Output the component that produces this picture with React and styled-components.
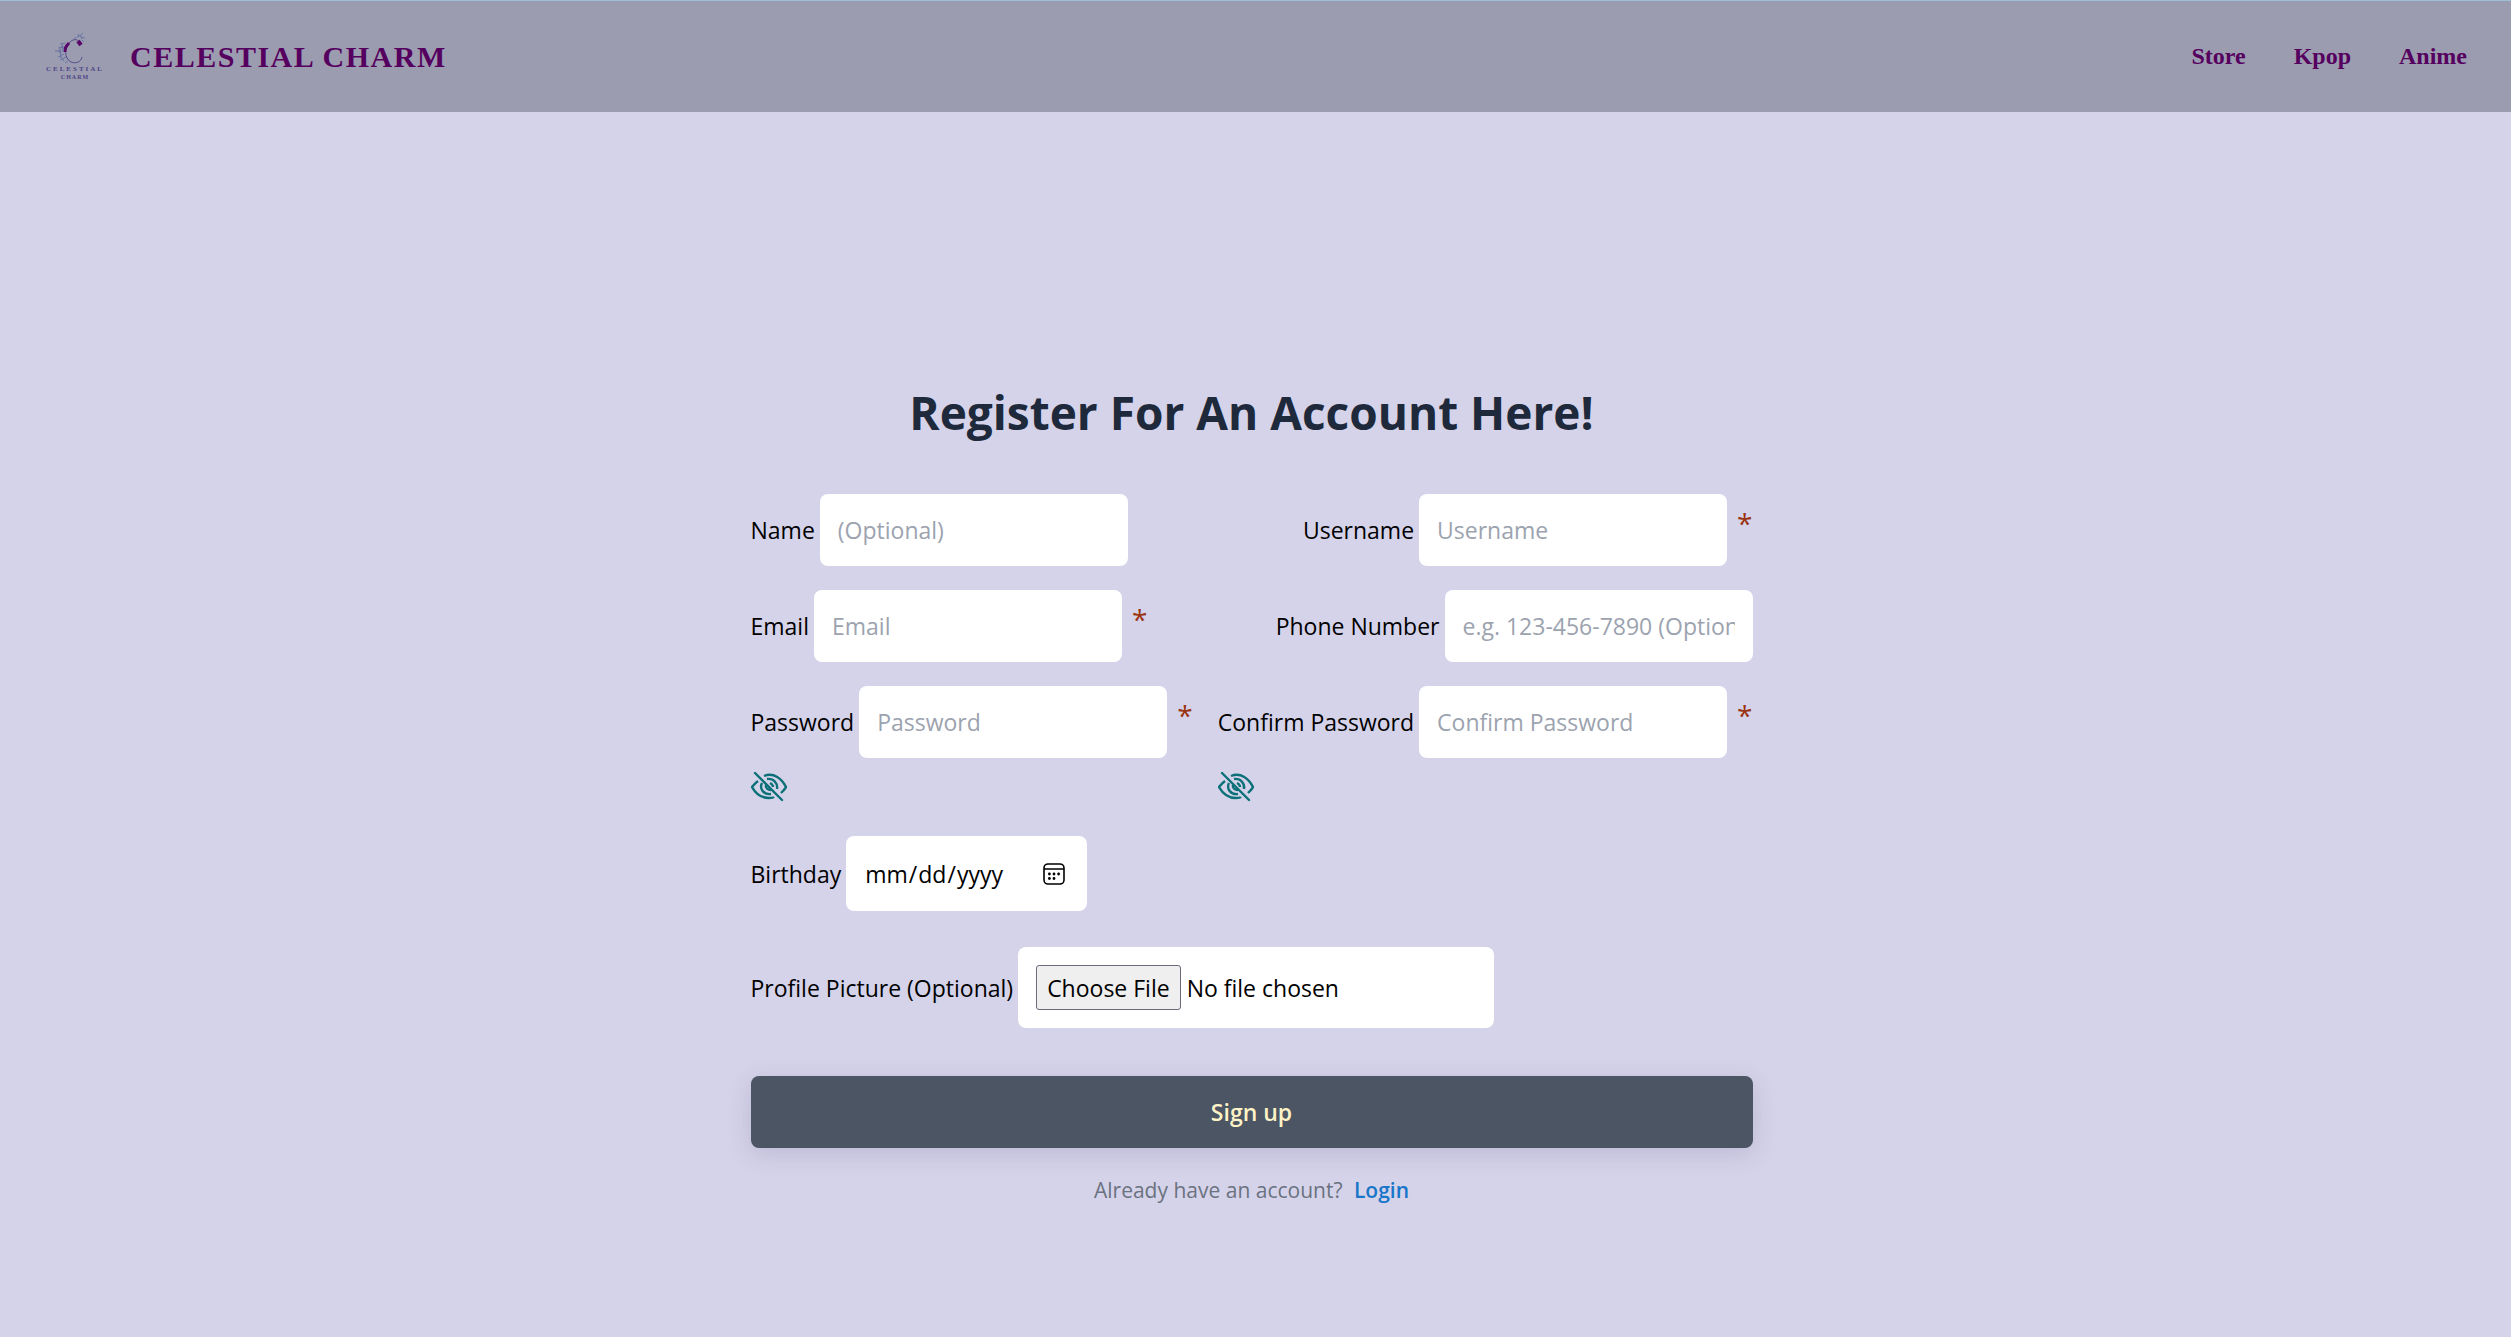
import React, { useState } from 'react';
import styled, { createGlobalStyle } from 'styled-components';

const calendarIcon = `url("data:image/svg+xml,%3Csvg xmlns='http://www.w3.org/2000/svg' viewBox='0 0 22 22' fill='none' stroke='%23000' stroke-width='1.6'%3E%3Crect x='1' y='1' width='20' height='20' rx='4'/%3E%3Cpath d='M1 6h20'/%3E%3Cg fill='%23000' stroke='none'%3E%3Ccircle cx='6.4' cy='11' r='1.4'/%3E%3Ccircle cx='11' cy='11' r='1.4'/%3E%3Ccircle cx='15.6' cy='11' r='1.4'/%3E%3Ccircle cx='6.4' cy='15.5' r='1.4'/%3E%3Ccircle cx='11' cy='15.5' r='1.4'/%3E%3C/g%3E%3C/svg%3E")`;

const Logo = () => (
    <LogoSvg viewBox="0 0 76 60" role="img" aria-label="Celestial Charm logo">
        <g fill="none" stroke="#5a0668">
            <path d="M45 18 C43 12 38 11 34 15 C28 21 28 31 35 35 C40 37 45 35 46 30" strokeWidth="1" stroke="#554a8c" />
            <path d="M33 16 C29 20 29 22 29 25" strokeWidth="3" />
            <path d="M42 14 L45 18" strokeWidth="4" />
        </g>
        <g fill="none" stroke="#6874a4" strokeWidth="1">
            <path d="M38 12 C42 9 43 10 47 6 M43 10 L42 7 M45 10 L49 11 M46 13 L48 15" />
            <path d="M29 16 L24 17 M28 20 L22 21 M28 24 L19 24 M28 27 L22 30 M30 30 L24 33 M32 34 L29 36 M26 16 L27 23 M24 21 L25 31" />
            <path d="M25 19 L28 23 M22 23 L25 27 M24 29 L28 34 M44 8 L46 12" />
        </g>
        <LogoText x="39" y="44" textAnchor="middle" fontSize="7" $gap={2}>CELESTIAL</LogoText>
        <LogoText x="39" y="52" textAnchor="middle" fontSize="6" $gap={1}>CHARM</LogoText>
    </LogoSvg>
);

const EyeOff = () => (
    <EyeSvg viewBox="0 0 36 30" aria-hidden="true">
        <path d="M7 9 C3 12 2 14 1 15 C5 22 11 26 18 26 C20 26 22 26 23 25 M13 4 C23 0 31 7 35 15 C34 17 32 19 30 21" />
        <path d="M11 11 C8 17 13 23 20 22 M16 7 C23 6 27 12 26 17" />
        <path d="M15 13 C14 16 17 18 20 18 M19 11 C21 12 22 13 22 15" />
        <path d="M4 1 L31 28" strokeLinecap="round" />
    </EyeSvg>
);

const Field = ({ id, label, type = 'text', placeholder, required }) => (
    <FieldRow>
        <Label htmlFor={id}>{label}</Label>
        <Input id={id} type={type} placeholder={placeholder} />
        {required && <Required>*</Required>}
    </FieldRow>
);

const PasswordField = ({ id, label }) => {
    const [visible, setVisible] = useState(false);

    return (
        <PasswordBox>
            <Field id={id} label={label} type={visible ? 'text' : 'password'} placeholder={label} required />
            <EyeButton type="button" aria-label={`Toggle ${label}`} onClick={() => setVisible(!visible)}>
                <EyeOff />
            </EyeButton>
        </PasswordBox>
    );
};

const App = () => {
    const handleSubmit = (event) => {
        event.preventDefault();
    };

    return (
        <>
            <GlobalStyle />
            <Header>
                <Brand href="#">
                    <Logo />
                    <BrandName>CELESTIAL CHARM</BrandName>
                </Brand>
                <Nav>
                    <NavLink href="#store">Store</NavLink>
                    <NavLink href="#kpop">Kpop</NavLink>
                    <NavLink href="#anime">Anime</NavLink>
                </Nav>
            </Header>
            <Main>
                <Title>Register For An Account Here!</Title>
                <Form onSubmit={handleSubmit}>
                    <Row>
                        <Field id="name" label="Name" placeholder="(Optional)" />
                        <Field id="username" label="Username" placeholder="Username" required />
                    </Row>
                    <Row>
                        <Field id="email" label="Email" type="email" placeholder="Email" required />
                        <Field id="phone" label="Phone Number" type="tel" placeholder="e.g. 123-456-7890 (Optional)" />
                    </Row>
                    <Row>
                        <PasswordField id="password" label="Password" />
                        <PasswordField id="confirm" label="Confirm Password" />
                    </Row>
                    <FieldRow $spaced>
                        <Label htmlFor="birthday">Birthday</Label>
                        <DateInput id="birthday" type="date" />
                    </FieldRow>
                    <FieldRow>
                        <Label htmlFor="picture">Profile Picture (Optional)</Label>
                        <FileInput id="picture" type="file" />
                    </FieldRow>
                    <SubmitButton type="submit">Sign up</SubmitButton>
                </Form>
                <Footer>
                    Already have an account? <LoginLink href="#login">Login</LoginLink>
                </Footer>
            </Main>
        </>
    );
};

// Styles
const GlobalStyle = createGlobalStyle`
    * {
        box-sizing: border-box;
    }

    body {
        margin: 0;
        background-color: #d5d3e9;
        color: #000;
        font-family: 'Open Sans', 'Noto Sans', sans-serif;
        font-size: 23px;
    }

    input, button {
        font: inherit;
    }
`;

const Header = styled.header`
    display: flex;
    justify-content: space-between;
    align-items: center;
    height: 112px;
    padding: 0 44px 0 36px;
    background-color: #9c9cb0;
    border-top: 1px solid #9dbfd8;
    font-family: 'Liberation Serif', serif;
    font-weight: 700;
`;

const Brand = styled.a`
    display: flex;
    align-items: center;
    gap: 18px;
    color: #55005f;
    text-decoration: none;
`;

const LogoSvg = styled.svg`
    width: 76px;
    height: 60px;
`;

const LogoText = styled.text`
    fill: #4d4585;
    letter-spacing: ${({ $gap }) => $gap}px;
`;

const BrandName = styled.span`
    font-size: 30px;
    letter-spacing: 0.05em;
`;

const Nav = styled.nav`
    display: flex;
    gap: 48px;
`;

const NavLink = styled.a`
    color: #55005f;
    font-size: 24px;
    text-decoration: none;
`;

const Main = styled.main`
    display: flex;
    flex-direction: column;
    align-items: center;
    padding: 264px 32px 48px 24px;
`;

const Title = styled.h1`
    margin: 0 0 46px;
    color: #1e293b;
    font-size: 46px;
    font-weight: 700;
    line-height: 72px;
`;

const Form = styled.form`
    display: flex;
    flex-direction: column;
    gap: 24px;
    width: 100%;
    max-width: 1002px;
`;

const Row = styled.div`
    display: flex;
    justify-content: space-between;
    align-items: flex-start;
`;

const FieldRow = styled.div`
    display: flex;
    align-items: center;
    margin-bottom: ${({ $spaced }) => ($spaced ? '12px' : '0')};
`;

const PasswordBox = styled.div`
    margin-bottom: 10px;
`;

const Label = styled.label`
    margin-right: 5px;
`;

const Input = styled.input`
    width: 308px;
    height: 72px;
    padding: 0 18px;
    background-color: #fff;
    border: none;
    border-radius: 8px;
    outline: none;

    &::placeholder {
        color: #9ca3af;
        opacity: 1;
    }
`;

const DateInput = styled(Input)`
    width: 241px;
    height: 75px;

    &::-webkit-calendar-picker-indicator {
        width: 22px;
        height: 22px;
        padding: 0;
        margin-right: 4px;
        background: ${calendarIcon} center / contain no-repeat;
    }
`;

const FileInput = styled(Input)`
    width: 476px;
    height: 81px;
    padding: 18px;

    &::file-selector-button {
        height: 45px;
        margin-right: 6px;
        padding: 0 10px;
        background-color: #efefef;
        border: 1px solid #6b6b7b;
        border-radius: 3px;
        font: inherit;
    }
`;

const Required = styled.span`
    align-self: flex-start;
    margin-left: 10px;
    color: #9a3412;
    font-size: 28px;
    line-height: 58px;
`;

const EyeButton = styled.button`
    display: block;
    margin-top: 14px;
    padding: 0;
    background: none;
    border: none;
    cursor: pointer;
`;

const EyeSvg = styled.svg`
    display: block;
    width: 36px;
    height: 30px;
    fill: none;
    stroke: #0b7078;
    stroke-width: 2.4;
`;

const SubmitButton = styled.button`
    height: 72px;
    margin-top: 24px;
    background-color: #4b5563;
    border: none;
    border-radius: 8px;
    box-shadow: 0 6px 24px rgba(60, 50, 110, .16);
    color: #fef3c7;
    font-weight: 600;
    cursor: pointer;
`;

const Footer = styled.p`
    margin: 24px 0 0;
    color: #6b7280;
    font-size: 21px;
    line-height: 36px;
`;

const LoginLink = styled.a`
    margin-left: 6px;
    color: #1976c8;
    font-weight: 600;
    text-decoration: none;
`;

export default App;
